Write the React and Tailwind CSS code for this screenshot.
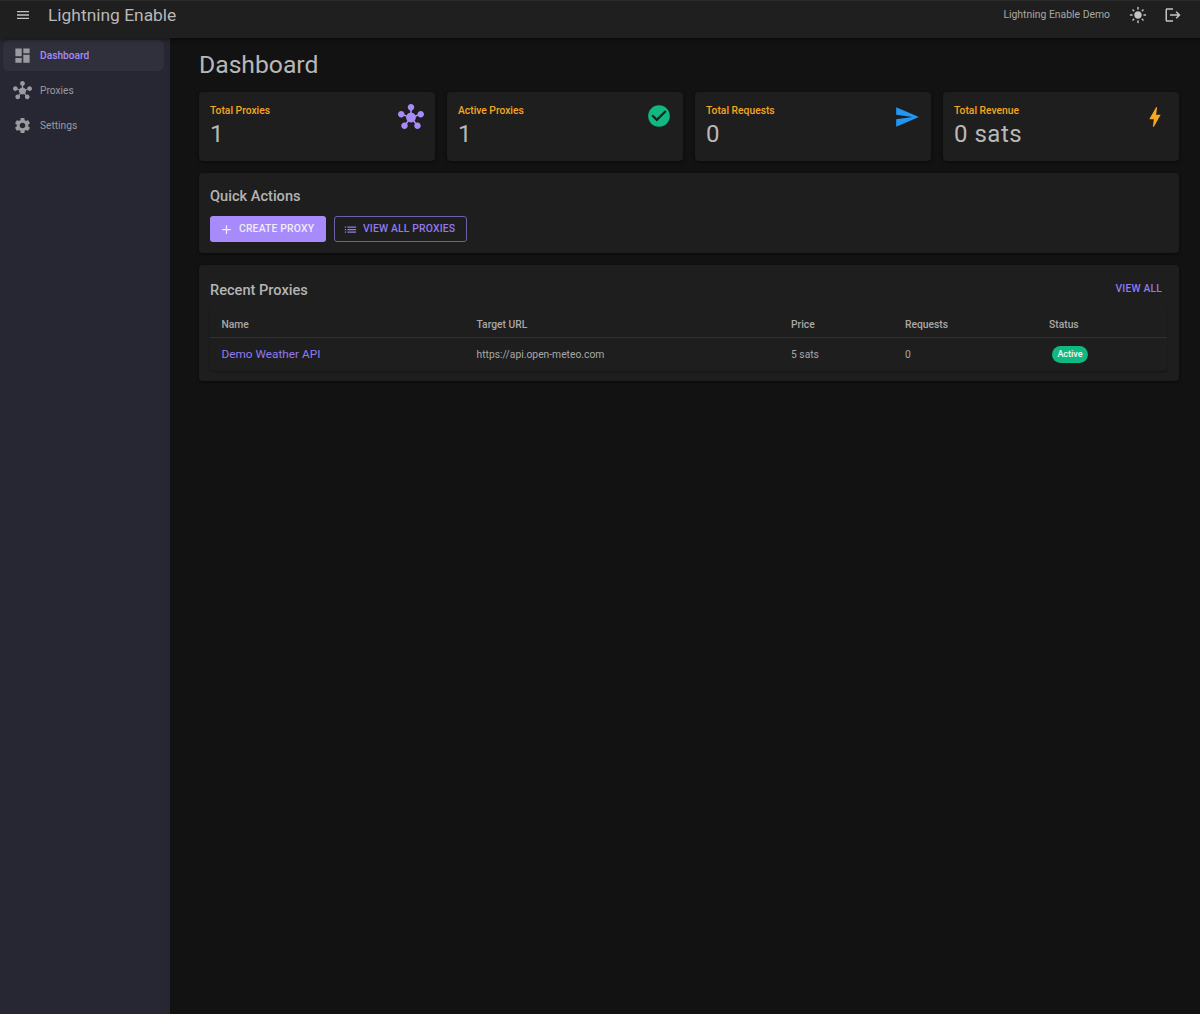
const paths = {
  menu: "M3 18h18v-2H3v2zm0-5h18v-2H3v2zm0-7v2h18V6H3z",
  dashboard: "M3 13h8V3H3v10zm0 8h8v-6H3v6zm10 0h8V11h-8v10zm0-18v6h8V3h-8z",
  hub: "M8.4 18.2c.38.5.6 1.12.6 1.8 0 1.66-1.34 3-3 3s-3-1.34-3-3 1.34-3 3-3c.44 0 .85.09 1.23.26l1.41-1.77c-.92-1.03-1.29-2.39-1.09-3.69l-2.03-.68c-.54.83-1.46 1.38-2.52 1.38-1.66 0-3-1.34-3-3s1.34-3 3-3 3 1.34 3 3c0 .07 0 .14-.01.21l2.03.68c.64-1.21 1.82-2.09 3.22-2.32V5.91C9.96 5.57 9 4.4 9 3c0-1.66 1.34-3 3-3s3 1.34 3 3c0 1.4-.96 2.57-2.25 2.91v2.16c1.4.23 2.58 1.11 3.22 2.32l2.03-.68C18 9.64 18 9.57 18 9.5c0-1.66 1.34-3 3-3s3 1.34 3 3-1.34 3-3 3c-1.06 0-1.98-.55-2.52-1.37l-2.03.68c.2 1.29-.16 2.65-1.09 3.69l1.41 1.77C17.15 17.09 17.56 17 18 17c1.66 0 3 1.34 3 3s-1.34 3-3 3-3-1.34-3-3c0-.68.22-1.3.6-1.8l-1.41-1.77c-1.35.75-3.01.76-4.37 0L8.4 18.2z",
  settings: "M19.14 12.94c.04-.3.06-.61.06-.94 0-.32-.02-.64-.07-.94l2.03-1.58c.18-.14.23-.41.12-.61l-1.92-3.32c-.12-.22-.37-.29-.59-.22l-2.39.96c-.5-.38-1.03-.7-1.62-.94l-.36-2.54c-.04-.24-.24-.41-.48-.41h-3.84c-.24 0-.43.17-.47.41l-.36 2.54c-.59.24-1.13.57-1.62.94l-2.39-.96c-.22-.08-.47 0-.59.22L2.74 8.87c-.12.21-.08.47.12.61l2.03 1.58c-.05.3-.09.63-.09.94s.02.64.07.94l-2.03 1.58c-.18.14-.23.41-.12.61l1.92 3.32c.12.22.37.29.59.22l2.39-.96c.5.38 1.03.7 1.62.94l.36 2.54c.05.24.24.41.48.41h3.84c.24 0 .44-.17.47-.41l.36-2.54c.59-.24 1.13-.56 1.62-.94l2.39.96c.22.08.47 0 .59-.22l1.92-3.32c.12-.22.07-.47-.12-.61l-2.01-1.58zM12 15.6c-1.98 0-3.6-1.62-3.6-3.6s1.62-3.6 3.6-3.6 3.6 1.62 3.6 3.6-1.62 3.6-3.6 3.6z",
  check: "M12 2C6.48 2 2 6.48 2 12s4.48 10 10 10 10-4.48 10-10S17.52 2 12 2zm-2 15l-5-5 1.41-1.41L10 14.17l7.59-7.59L19 8l-9 9z",
  send: "M2.01 21 23 12 2.01 3 2 10l15 2-15 2z",
  bolt: "M11 21h-1l1-7H7.5c-.58 0-.57-.32-.38-.66.19-.34.05-.08.07-.12C8.48 10.94 10.42 7.54 13 3h1l-1 7h3.5c.49 0 .56.33.47.51l-.07.15C12.96 17.55 11 21 11 21z",
  sun: "M12 7c-2.76 0-5 2.24-5 5s2.24 5 5 5 5-2.24 5-5-2.24-5-5-5zM2 13h2c.55 0 1-.45 1-1s-.45-1-1-1H2c-.55 0-1 .45-1 1s.45 1 1 1zm18 0h2c.55 0 1-.45 1-1s-.45-1-1-1h-2c-.55 0-1 .45-1 1s.45 1 1 1zM11 2v2c0 .55.45 1 1 1s1-.45 1-1V2c0-.55-.45-1-1-1s-1 .45-1 1zm0 18v2c0 .55.45 1 1 1s1-.45 1-1v-2c0-.55-.45-1-1-1s-1 .45-1 1zM5.99 4.58c-.39-.39-1.03-.39-1.41 0-.39.39-.39 1.03 0 1.41l1.06 1.06c.39.39 1.03.39 1.41 0s.39-1.03 0-1.41L5.99 4.58zm12.37 12.37c-.39-.39-1.03-.39-1.41 0-.39.39-.39 1.03 0 1.41l1.06 1.06c.39.39 1.03.39 1.41 0 .39-.39.39-1.03 0-1.41l-1.06-1.06zm1.06-10.96c.39-.39.39-1.03 0-1.41-.39-.39-1.03-.39-1.41 0l-1.06 1.06c-.39.39-.39 1.03 0 1.41s1.03.39 1.41 0l1.06-1.06zM7.05 18.36c.39-.39.39-1.03 0-1.41-.39-.39-1.03-.39-1.41 0l-1.06 1.06c-.39.39-.39 1.03 0 1.41s1.03.39 1.41 0l1.06-1.06z",
  logout: "M17 7l-1.41 1.41L18.17 11H8v2h10.17l-2.58 2.58L17 17l5-5zM4 5h8V3H4c-1.1 0-2 .9-2 2v14c0 1.1.9 2 2 2h8v-2H4V5z",
  add: "M19 13h-6v6h-2v-6H5v-2h6V5h2v6h6v2z",
  list: "M3 13h2v-2H3v2zm0 4h2v-2H3v2zm0-8h2V7H3v2zm4 4h14v-2H7v2zm0 4h14v-2H7v2zM7 7v2h14V7H7z",
};

function Icon({ name, className }) {
  return (
    <svg viewBox="0 0 24 24" fill="currentColor" className={className}>
      <path d={paths[name]} />
    </svg>
  );
}

function NavItem({ icon, label, active }) {
  return (
    <div className={`flex items-center h-[31px] ml-[3px] mr-[6px] rounded-[6px] pl-[10px] ${active ? "bg-[#2f303c]" : ""}`}>
      <Icon name={icon} className="w-[19px] h-[19px] mr-[8px] text-[#9a9aa0]" />
      <span className={`text-[10.2px] ${active ? "text-[#a78bfa] font-medium" : "text-[#9b9ba1]"}`}>{label}</span>
    </div>
  );
}

function StatCard({ title, value, icon, iconColor, iconClass }) {
  return (
    <div className="bg-[#1e1e1e] rounded-[4px] h-[69px] pl-[11px] pr-[11px] flex justify-between shadow-[0_1px_3px_rgba(0,0,0,0.5)]">
      <div className="pt-[12px]">
        <div className="text-[10.3px] leading-[13px] font-medium text-[#f5a623]">{title}</div>
        <div className="text-[24px] leading-[28px] mt-[3px] tracking-[0.5px] text-[#b8b8b8]">{value}</div>
      </div>
      <Icon name={icon} className={`${iconClass} ${iconColor}`} />
    </div>
  );
}

const cols = "grid grid-cols-[255px_314.5px_114px_144px_1fr]";

export default function App() {
  return (
    <div className="min-h-[1014px] bg-[#121212] flex flex-col font-['Roboto',sans-serif]">
      <header className="h-[38px] bg-[#1f1f1f] border-t border-[#2b2b2b] flex items-center pb-[9px] pl-[15px] pr-[18px] shadow-[0_2px_4px_rgba(0,0,0,0.4)] z-10">
        <Icon name="menu" className="w-[16px] h-[16px] text-[#c4c4c4]" />
        <span className="ml-[17px] text-[17.4px] text-[#b8b8b8]">Lightning Enable</span>
        <span className="ml-auto text-[10.4px] text-[#a8a8a8]">Lightning Enable Demo</span>
        <Icon name="sun" className="w-[18px] h-[18px] ml-[19px] text-[#c4c4c4]" />
        <Icon name="logout" className="w-[18px] h-[18px] ml-[17px] text-[#c4c4c4]" />
      </header>
      <div className="flex flex-1">
        <aside className="w-[170px] bg-[#262732] pt-[2px] flex flex-col gap-[4px]">
          <NavItem icon="dashboard" label="Dashboard" active />
          <NavItem icon="hub" label="Proxies" />
          <NavItem icon="settings" label="Settings" />
        </aside>
        <main className="flex-1 pl-[29px] pr-[21px] pt-[10px]">
          <h1 className="text-[24.7px] leading-[32px] mt-[1px] mb-[-1px] text-[#b8b8b8]">Dashboard</h1>
          <div className="grid grid-cols-4 gap-[12px] mt-[12px]">
            <StatCard title="Total Proxies" value="1" icon="hub" iconColor="text-[#a78bfa]" iconClass="w-[26px] h-[26px] mt-[12px]" />
            <StatCard title="Active Proxies" value="1" icon="check" iconColor="text-[#10b981]" iconClass="w-[26px] h-[26px] mt-[11px]" />
            <StatCard title="Total Requests" value="0" icon="send" iconColor="text-[#2196f3]" iconClass="w-[26px] h-[26px] mt-[12px]" />
            <StatCard title="Total Revenue" value="0 sats" icon="bolt" iconColor="text-[#f5a623]" iconClass="w-[26px] h-[26px] mt-[12px]" />
          </div>

          <section className="bg-[#1e1e1e] rounded-[4px] h-[80px] mt-[12px] pl-[11px] pt-[14px] shadow-[0_1px_3px_rgba(0,0,0,0.5)]">
            <h2 className="text-[14.6px] leading-[18px] font-medium text-[#b4b4b4]">Quick Actions</h2>
            <div className="flex gap-[8px] mt-[11px]">
              <button className="h-[26px] w-[116px] rounded-[3px] bg-[#a78bfa] flex items-center pl-[9px] text-[10.4px] font-medium tracking-[0.15px] text-[#efecf8]">
                <Icon name="add" className="w-[15px] h-[15px] mr-[5px]" />
                CREATE PROXY
              </button>
              <button className="h-[26px] w-[133px] rounded-[3px] border border-[#6f5ea8] flex items-center pl-[8px] text-[10.4px] font-medium tracking-[0.15px] text-[#927af0]">
                <Icon name="list" className="w-[15px] h-[15px] mr-[5px]" />
                VIEW ALL PROXIES
              </button>
            </div>
          </section>

          <section className="bg-[#1e1e1e] rounded-[4px] h-[116px] mt-[12px] px-[11px] shadow-[0_1px_3px_rgba(0,0,0,0.5)]">
            <div className="flex justify-between h-[41px] pt-[16px] pr-[6px]">
              <h2 className="text-[14.6px] leading-[18px] font-medium text-[#b4b4b4]">Recent Proxies</h2>
              <a className="text-[10.3px] leading-[15px] font-medium tracking-[0.2px] text-[#927af0]">VIEW ALL</a>
            </div>
            <div className="rounded-[4px] shadow-[0_1px_2px_rgba(0,0,0,0.35)] mr-[1px]">
              <div className={`${cols} h-[32px] items-center pt-[7px] pl-[11.5px] border-b border-[#303030] text-[10.3px] font-medium text-[#a8a8a8]`}>
                <span>Name</span>
                <span>Target URL</span>
                <span>Price</span>
                <span>Requests</span>
                <span>Status</span>
              </div>
              <div className={`${cols} h-[33px] items-center pl-[11.5px] text-[10.3px] text-[#a8a8a8]`}>
                <span className="text-[11.8px] text-[#927af0]">Demo Weather API</span>
                <span>https://api.open-meteo.com</span>
                <span>5 sats</span>
                <span>0</span>
                <span className="ml-[3px] w-[36px] h-[17px] rounded-full bg-[#10b981] text-[9px] leading-[17px] text-center font-medium text-[#f0faf6]">Active</span>
              </div>
            </div>
          </section>
        </main>
      </div>
    </div>
  );
}
